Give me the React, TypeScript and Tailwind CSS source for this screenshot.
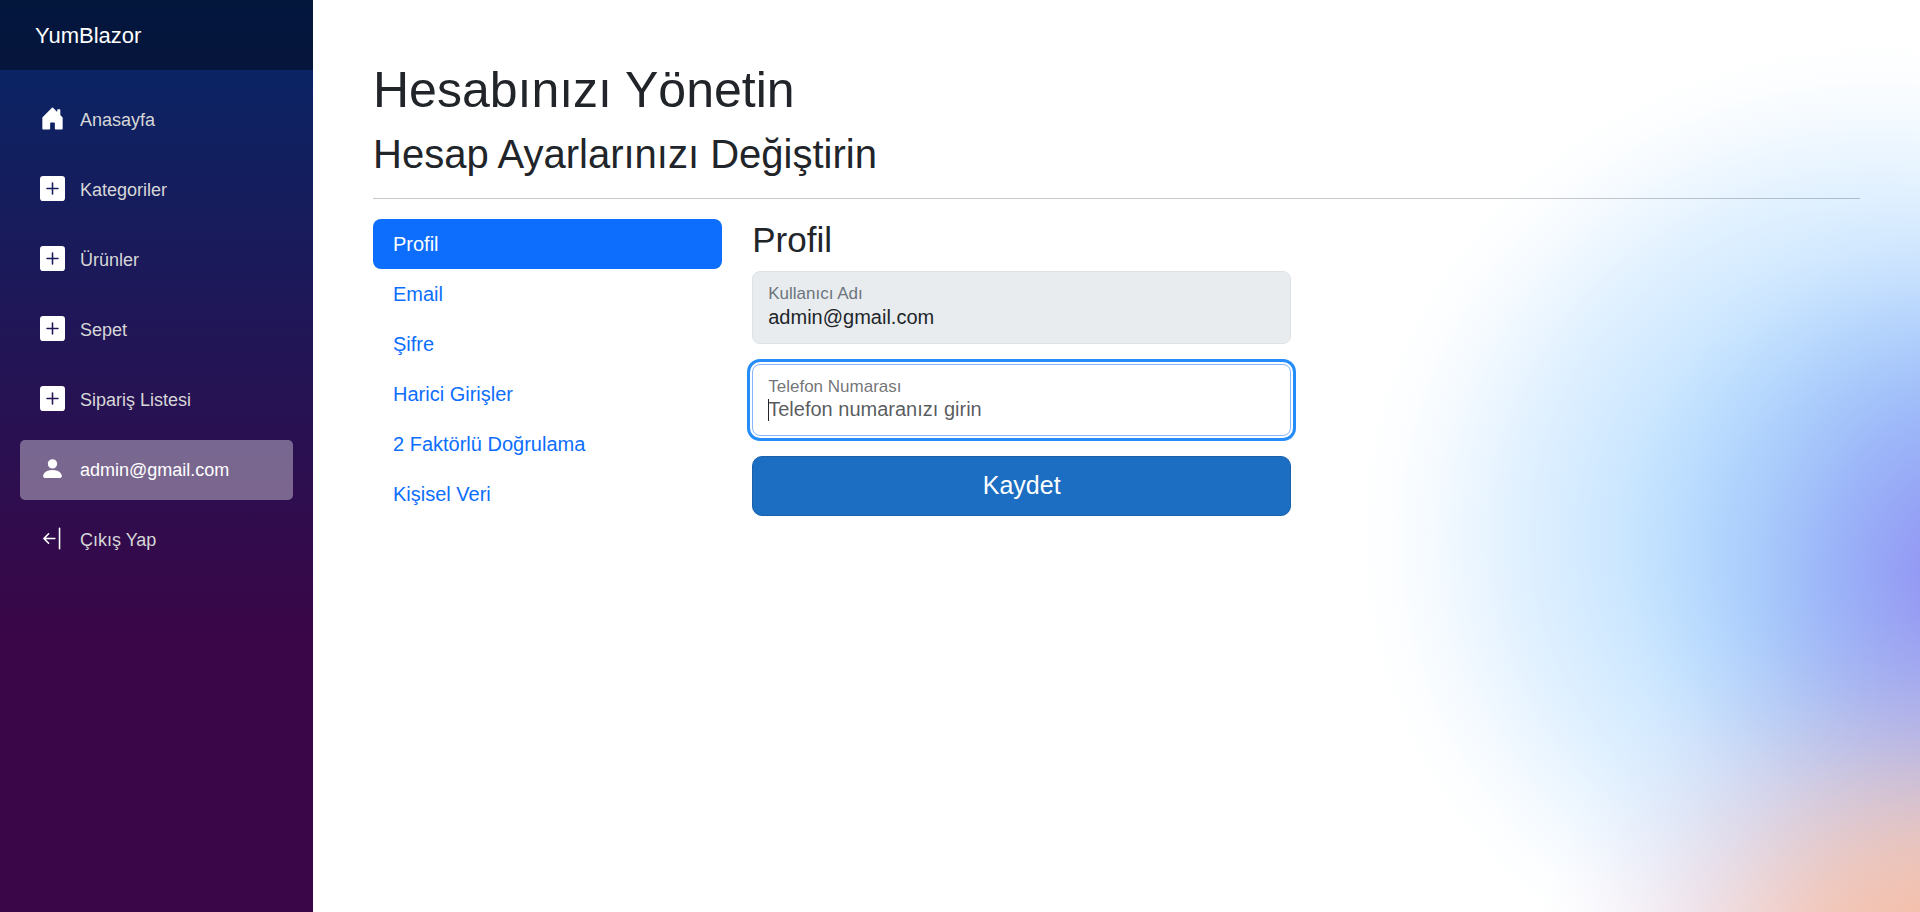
import React from "react";
import {
  BsArrowBarLeft,
  BsHouseDoorFill,
  BsPersonFill,
  BsPlusSquareFill,
} from "react-icons/bs";
import type { IconType } from "react-icons";

type MenuItem = { label: string; icon: IconType; active?: boolean };

const menu: MenuItem[] = [
  { label: "Anasayfa", icon: BsHouseDoorFill },
  { label: "Kategoriler", icon: BsPlusSquareFill },
  { label: "Ürünler", icon: BsPlusSquareFill },
  { label: "Sepet", icon: BsPlusSquareFill },
  { label: "Sipariş Listesi", icon: BsPlusSquareFill },
  { label: "admin@gmail.com", icon: BsPersonFill, active: true },
  { label: "Çıkış Yap", icon: BsArrowBarLeft },
];

const tabs = [
  "Profil",
  "Email",
  "Şifre",
  "Harici Girişler",
  "2 Faktörlü Doğrulama",
  "Kişisel Veri",
];

function Sidebar() {
  return (
    <aside className="w-[313px] shrink-0 bg-[linear-gradient(180deg,rgb(5,39,103)_0%,#3a0647_70%)]">
      <div className="flex h-[70px] items-center bg-black/40 px-[35px]">
        <a href="#home" className="text-[22px] leading-[33px] text-white">
          YumBlazor
        </a>
      </div>
      <nav className="flex flex-col gap-[10px] px-5 pt-5">
        {menu.map(({ label, icon: Icon, active }) => (
          <a
            key={label}
            href="#menu"
            className={
              active
                ? "flex h-[60px] items-center gap-[15px] rounded-[5px] bg-white/37 px-5 text-lg text-white"
                : "flex h-[60px] items-center gap-[15px] rounded-[5px] px-5 text-lg text-[#d7d7d7]"
            }
          >
            <Icon className="mb-[3px] size-[25px] shrink-0 text-white" aria-hidden="true" />
            {label}
          </a>
        ))}
      </nav>
    </aside>
  );
}

function ProfileForm() {
  return (
    <form className="flex flex-col gap-5" onSubmit={(e) => e.preventDefault()}>
      <div className="flex h-[73px] flex-col rounded-lg border border-[#dee2e6] bg-[#e9ecef] px-[15px] pt-3">
        <label htmlFor="username" className="text-[17px] leading-5 text-[#6c757d]">
          Kullanıcı Adı
        </label>
        <input
          id="username"
          type="text"
          defaultValue="admin@gmail.com"
          disabled
          className="h-[26px] w-full bg-transparent text-xl leading-6 text-[#212529]"
        />
      </div>
      <div className="flex h-[72px] flex-col rounded-lg border border-[#86b7fe] bg-white px-[15px] pt-3 shadow-[0_0_0_2px_white,0_0_0_5px_#258cfb]">
        <label htmlFor="phone" className="text-[17px] leading-5 text-[#212529]/65">
          Telefon Numarası
        </label>
        <div className="relative">
          <input
            id="phone"
            type="tel"
            autoFocus
            placeholder="Telefon numaranızı girin"
            className="peer block h-6 w-full bg-transparent text-xl leading-6 text-[#212529] caret-transparent outline-none placeholder:text-[#212529]/75 not-placeholder-shown:caret-[#212529]"
          />
          <span
            aria-hidden="true"
            className="pointer-events-none absolute top-0.5 bottom-0 left-0 hidden w-px bg-[#212529] peer-placeholder-shown:block"
          />
        </div>
      </div>
      <button
        type="submit"
        className="h-[60px] rounded-[10px] border border-[#1861ac] bg-[#1b6ec2] text-[25px] text-white"
      >
        Kaydet
      </button>
    </form>
  );
}

export default function App() {
  return (
    <div className="flex min-h-screen bg-white font-['Liberation_Sans',Arial,sans-serif] text-[#212529]">
      <Sidebar />
      <main className="min-w-0 flex-1 bg-[radial-gradient(400px_430px_at_calc(100%_+_20px)_1010px,rgb(247,187,162)_0%,rgb(246,187,164,0.92)_22%,rgb(244,187,168,0.75)_38%,rgb(240,184,176,0.52)_52%,rgb(234,180,190,0.32)_65%,rgb(228,178,202,0.15)_79%,rgb(225,178,212,0.05)_91%,rgb(225,178,215,0)_102%),radial-gradient(330px_400px_at_calc(100%_+_40px)_580px,rgb(148,150,243)_0%,rgb(148,154,244)_12%,rgb(150,168,246,0.93)_30%,rgb(150,172,247,0.78)_41%,rgb(151,176,246,0.58)_52%,rgb(151,178,246,0.36)_63%,rgb(153,178,246,0.16)_76%,rgb(155,178,246,0.05)_88%,rgb(155,178,246,0)_100%),radial-gradient(505px_475px_at_calc(100%_-_40px)_535px,rgb(176,216,254)_0%,rgb(178,218,255,0.95)_30%,rgb(181,220,255,0.8)_46%,rgb(181,220,255,0.63)_56%,rgb(181,220,255,0.44)_70%,rgb(181,220,255,0.26)_81%,rgb(181,220,255,0.12)_90%,rgb(181,220,255,0.05)_96%,rgb(181,220,255,0)_104%)] px-[60px] pt-[60px]">
        <h1 className="mb-[10px] text-[50px] leading-[60px]">Hesabınızı Yönetin</h1>
        <h2 className="text-[40px] leading-[48px]">Hesap Ayarlarınızı Değiştirin</h2>
        <hr className="my-5 border-[#212529]/25" />
        <div className="grid grid-cols-4 gap-[30px]">
          <nav className="flex flex-col">
            {tabs.map((tab, i) => (
              <a
                key={tab}
                href="#tab"
                className={
                  i === 0
                    ? "rounded-lg bg-[#0d6efd] px-5 py-[10px] text-xl leading-[30px] text-white"
                    : "rounded-lg px-5 py-[10px] text-xl leading-[30px] text-[#0d6efd]"
                }
              >
                {tab}
              </a>
            ))}
          </nav>
          <section className="col-span-3">
            <h3 className="mb-[10px] text-[35px] leading-[42px]">Profil</h3>
            <div className="grid grid-cols-2 gap-[30px]">
              <ProfileForm />
            </div>
          </section>
        </div>
      </main>
    </div>
  );
}
